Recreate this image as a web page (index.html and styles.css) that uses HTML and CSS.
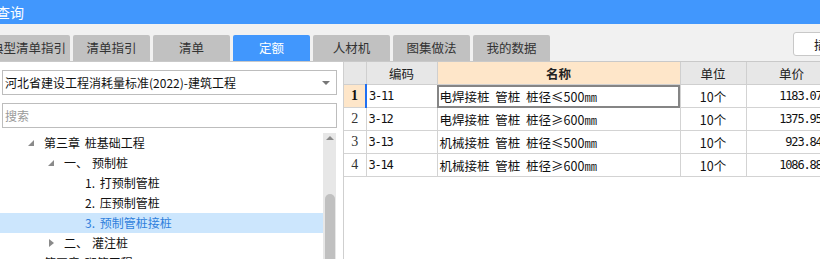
FILE: index.html
```html
<!DOCTYPE html>
<html lang="zh-CN">
<head>
  <meta charset="UTF-8" />
  <title>查询</title>
  <link rel="stylesheet" href="styles.css">
</head>
<body>
  <div class="window">
    <!-- title bar -->
    <div class="titlebar"><span class="title">查询</span></div>

    <!-- tabs -->
    <div class="tabbar">
      <div class="tabs">
        <div class="tab first"><span>典型清单指引</span></div>
        <div class="tab">清单指引</div>
        <div class="tab">清单</div>
        <div class="tab active">定额</div>
        <div class="tab">人材机</div>
        <div class="tab">图集做法</div>
        <div class="tab">我的数据</div>
      </div>
      <button class="insert-btn">插入子目</button>
    </div>

    <div class="main">
      <!-- left: library + tree -->
      <div class="side">
        <div class="select">
          <span>河北省建设工程消耗量标准(2022)-建筑工程</span>
          <span class="caret"></span>
        </div>
        <div class="search">搜索</div>
        <div class="tree-wrap">
          <ul class="tree">
            <li class="node lv0"><span class="tri open"></span>第三章 桩基础工程</li>
            <li class="node lv1"><span class="tri open"></span>一、<span class="gap"></span>预制桩</li>
            <li class="node lv2">1. 打预制管桩</li>
            <li class="node lv2">2. 压预制管桩</li>
            <li class="node lv2 selected">3. 预制管桩接桩</li>
            <li class="node lv1"><span class="tri closed"></span>二、<span class="gap"></span>灌注桩</li>
            <li class="node lv0"><span class="tri none"></span>第四章 砌筑工程</li>
          </ul>
          <div class="scrollbar">
            <span class="up"></span>
            <div class="thumb"></div>
          </div>
        </div>
      </div>

      <!-- right: quota grid -->
      <div class="grid">
        <table>
          <colgroup>
            <col class="c-no"><col class="c-code"><col class="c-name"><col class="c-unit"><col class="c-price">
          </colgroup>
          <thead>
            <tr>
              <th></th>
              <th>编码</th>
              <th class="hl">名称</th>
              <th>单位</th>
              <th>单价</th>
            </tr>
          </thead>
          <tbody>
            <tr class="current">
              <td class="no">1</td>
              <td class="code">3-11</td>
              <td class="name focus">电焊接桩 管桩 桩径≤500㎜</td>
              <td class="unit">10个</td>
              <td class="price">1183.07</td>
            </tr>
            <tr>
              <td class="no">2</td>
              <td class="code">3-12</td>
              <td class="name">电焊接桩 管桩 桩径≥600㎜</td>
              <td class="unit">10个</td>
              <td class="price">1375.95</td>
            </tr>
            <tr>
              <td class="no">3</td>
              <td class="code">3-13</td>
              <td class="name">机械接桩 管桩 桩径≤500㎜</td>
              <td class="unit">10个</td>
              <td class="price">923.84</td>
            </tr>
            <tr>
              <td class="no">4</td>
              <td class="code">3-14</td>
              <td class="name">机械接桩 管桩 桩径≥600㎜</td>
              <td class="unit">10个</td>
              <td class="price">1086.88</td>
            </tr>
          </tbody>
        </table>
      </div>
    </div>
  </div>
</body>
</html>
```

FILE: styles.css
```css
body {
  margin: 0;
  font-family: "Noto Sans CJK SC", "Noto Sans", sans-serif;
  font-size: 12px;
  color: #222;
  background: #fff;
}
.window {
  width: 820px;
  height: 259px;
  overflow: hidden;
  display: flex;
  flex-direction: column;
}
.titlebar {
  height: 24px;
  flex: none;
  background: #4197fd;
  color: #fff;
  font-size: 14px;
  line-height: 24px;
}
.title {
  margin-left: -4px;
}
.tabbar {
  height: 37px;
  flex: none;
  background: #f1f1f1;
  border-bottom: 1px solid #c9c9c9;
  display: flex;
  align-items: flex-end;
}
.tabs {
  display: flex;
  gap: 3px;
  margin-left: -5px;
}
.tab {
  width: 77px;
  height: 26px;
  line-height: 26px;
  text-align: center;
  background: #c1c1c1;
  color: #333;
  font-size: 12.5px;
  white-space: nowrap;
  border-radius: 2px 2px 0 0;
}
.tab.first {
  width: 75px;
  display: flex;
  justify-content: flex-end;
  padding-right: 4px;
  box-sizing: border-box;
}
.tab.active {
  background: #4197fd;
  color: #fff;
}
.insert-btn {
  margin-left: auto;
  margin-right: -60px;
  margin-bottom: 5px;
  width: 87px;
  height: 24px;
  background: #fff;
  border: 1px solid #c8c8c8;
  border-radius: 3px;
  font-family: inherit;
  font-size: 12.5px;
  color: #222;
  text-align: left;
  padding-left: 20px;
}
.main {
  flex: 1;
  display: flex;
  min-height: 0;
}
.side {
  width: 343px;
  flex: none;
  border-right: 1px solid #cfcfcf;
  display: flex;
  flex-direction: column;
}
.select, .search {
  height: 23px;
  margin: 0 6px 0 2px;
  border: 1px solid #bdbdbd;
  display: flex;
  align-items: center;
  padding-left: 2px;
  font-size: 12px;
  white-space: nowrap;
}
.select {
  margin-top: 8px;
  justify-content: space-between;
  color: #111;
}
.caret {
  width: 0;
  height: 0;
  border-left: 4px solid transparent;
  border-right: 4px solid transparent;
  border-top: 4px solid #777;
  margin-right: 6px;
}
.search {
  margin-top: 8px;
  color: #9a9a9a;
}
.tree-wrap {
  margin-top: 5px;
  flex: 1;
  display: flex;
  min-height: 0;
  padding-right: 7px;
}
.tree {
  list-style: none;
  margin: 0;
  padding: 0;
  flex: 1;
  overflow: hidden;
}
.node {
  height: 20px;
  line-height: 20px;
  display: flex;
  align-items: center;
  white-space: nowrap;
  color: #111;
  word-spacing: 2px;
}
.lv0 { padding-left: 28px; }
.lv1 { padding-left: 48px; }
.lv2 { padding-left: 85px; }
.node.selected {
  background: #cce6fd;
  color: #2f7fdc;
}
.tri {
  width: 16px;
  height: 8px;
  flex: none;
  position: relative;
}
.tri.open::before {
  content: "";
  position: absolute;
  left: 0;
  top: 1px;
  border-left: 6px solid transparent;
  border-bottom: 6px solid #8a8a8a;
}
.tri.closed::before {
  content: "";
  position: absolute;
  left: 1px;
  top: 0;
  border-top: 4px solid transparent;
  border-bottom: 4px solid transparent;
  border-left: 5px solid #8a8a8a;
}
.gap {
  display: inline-block;
  width: 4px;
}
.scrollbar {
  width: 13px;
  flex: none;
  background: #e7e7e7;
  display: flex;
  flex-direction: column;
  align-items: center;
}
.up {
  margin-top: 3px;
  border-left: 4px solid transparent;
  border-right: 4px solid transparent;
  border-bottom: 4px solid #8a8a8a;
}
.thumb {
  margin-top: 54px;
  width: 10px;
  flex: 1;
  background: #c0c0c0;
  border-radius: 5px 5px 0 0;
}
.grid {
  flex: 1;
  overflow: hidden;
}
table {
  border-collapse: collapse;
  table-layout: fixed;
  width: 493px;
}
.c-no { width: 22px; }
.c-code { width: 71px; }
.c-name { width: 243px; }
.c-unit { width: 66px; }
.c-price { width: 91px; }
th, td {
  height: 22px;
  padding: 0;
  border: 1px solid #d3d3d3;
  white-space: nowrap;
  overflow: hidden;
}
th {
  background: #e7e7e7;
  font-weight: normal;
  font-size: 12.5px;
  color: #222;
  border-top: none;
  border-color: #cfcfcf;
}
th:first-child, td:first-child {
  border-left: none;
}
th.hl {
  background: #fee6c9;
  font-weight: bold;
}
td {
  font-size: 12.5px;
  color: #111;
}
td.no {
  text-align: center;
  font-family: "Liberation Serif", serif;
  font-size: 14px;
  color: #333;
}
tr.current td.no {
  background: #fee6c9;
  font-weight: bold;
  color: #111;
}
td.code, td.price {
  font-family: "DejaVu Sans Mono", monospace;
  font-size: 12px;
  letter-spacing: -1.2px;
}
td.code {
  padding-left: 2px;
}
tr.current td.code {
  border-left: 2px solid #1f6ff2;
}
td.name {
  padding-left: 2px;
  word-spacing: 3px;
}
td.name.focus {
  outline: 2px solid #858585;
  outline-offset: -2px;
}
td.unit {
  text-align: center;
}
td.price {
  text-align: right;
  padding-right: 15px;
}
```
